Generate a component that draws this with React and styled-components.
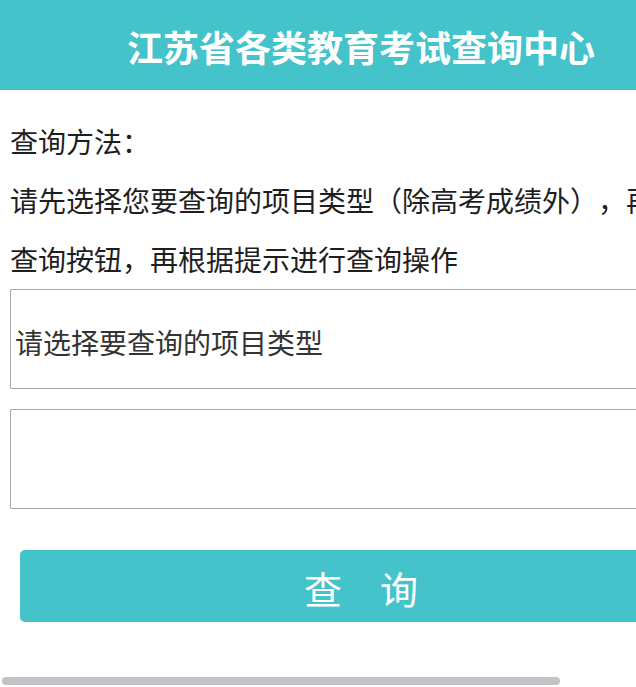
import React from 'react';
import styled, { createGlobalStyle } from 'styled-components';

const GlobalStyle = createGlobalStyle`
  html, body {
    margin: 0;
    padding: 0;
    background: #fff;
  }
  body {
    font-family: "Microsoft YaHei", "Noto Sans CJK SC", "Noto Sans", sans-serif;
    color: #222;
    text-spacing-trim: space-all;
  }
`;

const Page = styled.div`
  width: 722px;
`;

const Header = styled.header`
  height: 90px;
  background: #45c3ca;
  display: flex;
  align-items: center;
  justify-content: center;
`;

const Title = styled.h1`
  margin: 0;
  font-size: 36px;
  font-weight: 700;
  color: #fff;
  padding-top: 2px;
`;

const Content = styled.div`
  padding: 22px 10px 0;
`;

const Line = styled.p`
  margin: 0;
  font-size: 28px;
  line-height: 59px;
  white-space: nowrap;
  color: #1e1e1e;
`;

const Field = styled.div`
  box-sizing: border-box;
  height: 100px;
  border: 1px solid #a9a9a9;
  border-radius: 1px;
  padding: 5px 4px 0;
  display: flex;
  align-items: center;
  font-size: 28px;
  color: #333;
  margin-top: ${props => props.gap || 0}px;
`;

const Button = styled.button`
  display: block;
  box-sizing: border-box;
  width: calc(100% - 20px);
  height: 72px;
  margin: 41px 10px 0;
  border: none;
  border-radius: 5px;
  background: #45c3ca;
  color: #fff;
  font-family: inherit;
  font-size: 38px;
  padding: 2px 0 0;
  cursor: pointer;
`;

// horizontal scroll indicator drawn over the bottom edge
const ScrollThumb = styled.div`
  position: fixed;
  left: 2px;
  bottom: 2px;
  width: 558px;
  height: 8px;
  border-radius: 4px;
  background: #c2c3c7;
`;

const App = () => {
  return (
    <Page>
      <GlobalStyle />
      <Header>
        <Title>江苏省各类教育考试查询中心</Title>
      </Header>
      <Content>
        <Line>查询方法：</Line>
        <Line>请先选择您要查询的项目类型（除高考成绩外），再点击</Line>
        <Line>查询按钮，再根据提示进行查询操作</Line>
        <Field>请选择要查询的项目类型</Field>
        <Field gap={20} />
        <Button>查　询</Button>
      </Content>
      <ScrollThumb />
    </Page>
  );
};

export default App;
